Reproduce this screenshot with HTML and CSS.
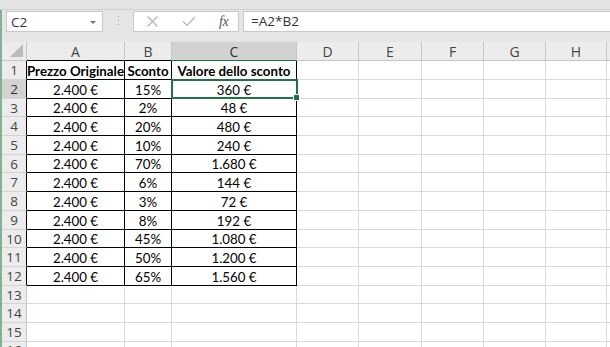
FILE: index.html
```html
<!DOCTYPE html>
<html lang="it">
<head>
<meta charset="utf-8">
<title>Excel</title>
<link rel="stylesheet" href="styles.css">
</head>
<body>
<div class="app">
  <div class="ribbon-edge"></div>
  <div class="work">
    <div class="fbar">
      <div class="namebox"><span class="nb-text">C2</span><span class="nb-arrow"></span></div>
      <div class="grip">
        <svg width="3" height="11" viewBox="0 0 3 11"><rect x="1" y="0" width="1" height="1" fill="#9a9a9a"/><rect x="1" y="4" width="1" height="1" fill="#9a9a9a"/><rect x="1" y="8" width="1" height="1" fill="#9a9a9a"/></svg>
      </div>
      <div class="fbuttons">
        <svg class="ico" width="13" height="11" viewBox="0 0 13 11"><path d="M1.5 0.5 L11.5 10.5 M11.5 0.5 L1.5 10.5" stroke="#b4b4b4" stroke-width="1.1" fill="none"/></svg>
        <svg class="ico" width="14" height="11" viewBox="0 0 14 11"><path d="M1 5.5 L5 9.5 L13 1" stroke="#b4b4b4" stroke-width="1.2" fill="none"/></svg>
        <span class="fx">fx</span>
      </div>
      <div class="finput">=A2*B2</div>
    </div>
    <div class="sheet">
      <div class="corner"><svg width="14" height="14" viewBox="0 0 14 14"><polygon points="13,0 13,13 0,13" fill="#bcbcbc"/></svg></div>
      <div class="ch blk">A</div>
      <div class="ch blk">B</div>
      <div class="ch sel">C</div>
      <div class="ch">D</div>
      <div class="ch">E</div>
      <div class="ch">F</div>
      <div class="ch">G</div>
      <div class="ch">H</div>
      <div class="ch end"></div>

      <div class="rh blk">1</div>
      <div class="t b">Prezzo Originale</div>
      <div class="t b">Sconto</div>
      <div class="t b">Valore dello sconto</div>
      <div class="c"></div><div class="c"></div><div class="c"></div><div class="c"></div><div class="c"></div><div class="c end"></div>

      <div class="rh blk rsel">2</div>
      <div class="t">2.400 €</div>
      <div class="t">15%</div>
      <div class="t active">360 €</div>
      <div class="c"></div><div class="c"></div><div class="c"></div><div class="c"></div><div class="c"></div><div class="c end"></div>

      <div class="rh blk">3</div>
      <div class="t">2.400 €</div>
      <div class="t">2%</div>
      <div class="t">48 €</div>
      <div class="c"></div><div class="c"></div><div class="c"></div><div class="c"></div><div class="c"></div><div class="c end"></div>

      <div class="rh blk">4</div>
      <div class="t">2.400 €</div>
      <div class="t">20%</div>
      <div class="t">480 €</div>
      <div class="c"></div><div class="c"></div><div class="c"></div><div class="c"></div><div class="c"></div><div class="c end"></div>

      <div class="rh blk">5</div>
      <div class="t">2.400 €</div>
      <div class="t">10%</div>
      <div class="t">240 €</div>
      <div class="c"></div><div class="c"></div><div class="c"></div><div class="c"></div><div class="c"></div><div class="c end"></div>

      <div class="rh blk">6</div>
      <div class="t">2.400 €</div>
      <div class="t">70%</div>
      <div class="t">1.680 €</div>
      <div class="c"></div><div class="c"></div><div class="c"></div><div class="c"></div><div class="c"></div><div class="c end"></div>

      <div class="rh blk">7</div>
      <div class="t">2.400 €</div>
      <div class="t">6%</div>
      <div class="t">144 €</div>
      <div class="c"></div><div class="c"></div><div class="c"></div><div class="c"></div><div class="c"></div><div class="c end"></div>

      <div class="rh blk">8</div>
      <div class="t">2.400 €</div>
      <div class="t">3%</div>
      <div class="t">72 €</div>
      <div class="c"></div><div class="c"></div><div class="c"></div><div class="c"></div><div class="c"></div><div class="c end"></div>

      <div class="rh blk">9</div>
      <div class="t">2.400 €</div>
      <div class="t">8%</div>
      <div class="t">192 €</div>
      <div class="c"></div><div class="c"></div><div class="c"></div><div class="c"></div><div class="c"></div><div class="c end"></div>

      <div class="rh blk">10</div>
      <div class="t">2.400 €</div>
      <div class="t">45%</div>
      <div class="t">1.080 €</div>
      <div class="c"></div><div class="c"></div><div class="c"></div><div class="c"></div><div class="c"></div><div class="c end"></div>

      <div class="rh blk">11</div>
      <div class="t">2.400 €</div>
      <div class="t">50%</div>
      <div class="t">1.200 €</div>
      <div class="c"></div><div class="c"></div><div class="c"></div><div class="c"></div><div class="c"></div><div class="c end"></div>

      <div class="rh blk">12</div>
      <div class="t">2.400 €</div>
      <div class="t">65%</div>
      <div class="t">1.560 €</div>
      <div class="c"></div><div class="c"></div><div class="c"></div><div class="c"></div><div class="c"></div><div class="c end"></div>

      <div class="rh">13</div>
      <div class="c"></div><div class="c"></div><div class="c"></div><div class="c"></div><div class="c"></div><div class="c"></div><div class="c"></div><div class="c"></div><div class="c end"></div>

      <div class="rh">14</div>
      <div class="c"></div><div class="c"></div><div class="c"></div><div class="c"></div><div class="c"></div><div class="c"></div><div class="c"></div><div class="c"></div><div class="c end"></div>

      <div class="rh">15</div>
      <div class="c"></div><div class="c"></div><div class="c"></div><div class="c"></div><div class="c"></div><div class="c"></div><div class="c"></div><div class="c"></div><div class="c end"></div>

      <div class="rh rlast">16</div>
      <div class="c"></div><div class="c"></div><div class="c"></div><div class="c"></div><div class="c"></div><div class="c"></div><div class="c"></div><div class="c"></div><div class="c end"></div>
    </div>
  </div>
</div>
</body>
</html>
```
FILE: styles.css
```css
html, body {
  margin: 0;
  padding: 0;
  width: 610px;
  height: 347px;
  overflow: hidden;
  background: #ffffff;
}

.app {
  display: flex;
  flex-direction: column;
  width: 610px;
  height: 347px;
  background: #e6e6e6;
  font-family: "Open Sans", "Noto Sans", sans-serif;
}

.ribbon-edge {
  height: 9px;
  border-bottom: 1px solid #d2d2d2;
  background: #e3e3e3;
  flex: none;
}

.work {
  flex: 1;
  display: flex;
  flex-direction: column;
  border-left: 2px solid #7fb394;
  min-height: 0;
}

/* formula bar */
.fbar {
  display: flex;
  align-items: center;
  height: 21px;
  margin-top: 1px;
  padding-left: 4px;
  flex: none;
}

.namebox {
  width: 97px;
  height: 21px;
  box-sizing: border-box;
  background: #fff;
  border: 1px solid #c8c8c8;
  display: flex;
  align-items: center;
  justify-content: space-between;
  padding: 0 6px 0 4px;
}

.nb-text {
  font-size: 13.5px;
  color: #333;
}

.nb-arrow {
  width: 0;
  height: 0;
  border-left: 3px solid transparent;
  border-right: 3px solid transparent;
  border-top: 3px solid #777;
  margin-top: 1px;
}

.grip {
  width: 30px;
  display: flex;
  justify-content: center;
  align-items: center;
}

.fbuttons {
  width: 106px;
  height: 21px;
  box-sizing: border-box;
  background: #fff;
  border: 1px solid #c8c8c8;
  display: flex;
  align-items: center;
  padding-left: 12px;
  gap: 23px;
}

.ico {
  display: block;
}

.fx {
  font-family: "Liberation Serif", "DejaVu Serif", serif;
  font-style: italic;
  font-size: 14px;
  color: #555;
  letter-spacing: -0.5px;
}

.finput {
  flex: 1;
  height: 21px;
  box-sizing: border-box;
  margin-left: 4px;
  background: #fff;
  border: 1px solid #c8c8c8;
  border-right: none;
  font-size: 13.5px;
  color: #333;
  line-height: 19px;
  padding-left: 7px;
}

/* sheet grid */
.sheet {
  margin-top: 10px;
  display: grid;
  grid-template-columns: 25px 98px 47px 125px 62px 63px 62px 62px 61px 1fr;
  grid-template-rows: 19px 19px 19px 18px 19px 19px 18px 19px 19px 19px 18px 19px 19px 18px 19px 19px 19px;
  background: #fff;
}

.sheet > div {
  box-sizing: border-box;
  border-right: 1px solid #d9d9d9;
  border-bottom: 1px solid #d9d9d9;
  display: flex;
  align-items: center;
  justify-content: center;
  white-space: nowrap;
  overflow: visible;
}

.corner {
  background: #ececec;
  border-right-color: #c6c6c6 !important;
  border-bottom-color: #c6c6c6 !important;
  align-items: flex-end !important;
  justify-content: flex-end !important;
  padding: 0 2px 2px 0;
}

.corner svg {
  display: block;
}

.ch {
  background: #ececec;
  font-size: 14px;
  color: #444;
  border-right-color: #c6c6c6 !important;
  border-bottom-color: #c6c6c6 !important;
}

.ch.blk {
  border-bottom-color: #000 !important;
}

.ch.sel {
  background: #d2d2d2;
  border-bottom: 1px solid #217346 !important;
  color: #333;
}

.ch.end {
  border-right: none !important;
}

.rh {
  background: #ececec;
  font-size: 13.5px;
  color: #444;
  border-right-color: #c6c6c6 !important;
  border-bottom-color: #d4d4d4 !important;
}

.rh.rlast {
  align-items: flex-start !important;
  line-height: 17px;
}

.rh.blk {
  border-right-color: #000 !important;
}

.rh.rsel {
  background: #d2d2d2;
  color: #333;
}

.t, .c {
  font-family: Lato, "Liberation Sans", sans-serif;
  font-size: 13.3px;
  color: #000;
  padding-top: 1px;
}

.t {
  border-right-color: #000 !important;
  border-bottom-color: #000 !important;
}

.b {
  font-weight: 700;
}

.end {
  border-right: none !important;
}

.active {
  position: relative;
}

.active::after {
  content: "";
  position: absolute;
  left: -1px;
  top: -1px;
  right: -2px;
  bottom: -1px;
  border: 2px solid #217346;
}

.active::before {
  content: "";
  position: absolute;
  right: -4px;
  bottom: -3px;
  width: 5px;
  height: 5px;
  background: #217346;
  border: 1px solid #fff;
  z-index: 2;
}
```
